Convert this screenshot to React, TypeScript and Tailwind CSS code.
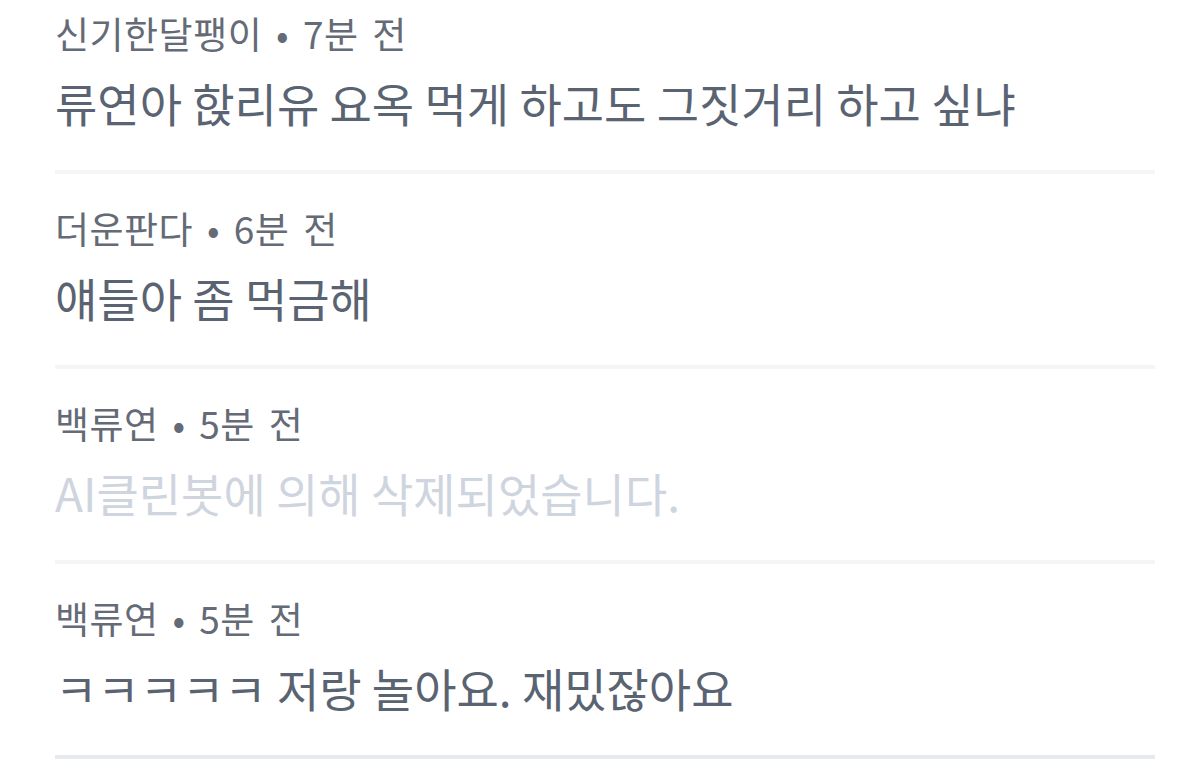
const comments = [
  { author: "신기한달팽이", time: "7분 전", text: "류연아 핝리유 요옥 먹게 하고도 그짓거리 하고 싶냐", deleted: false },
  { author: "더운판다", time: "6분 전", text: "얘들아 좀 먹금해", deleted: false },
  { author: "백류연", time: "5분 전", text: "AI클린봇에 의해 삭제되었습니다.", deleted: true },
  { author: "백류연", time: "5분 전", text: "ㅋㅋㅋㅋㅋ 저랑 놀아요. 재밌잖아요", deleted: false },
];

export default function App() {
  return (
    <div
      className="min-h-[771px] bg-white pl-[55px] pr-[45px]"
      style={{ fontFamily: '"Noto Sans CJK KR", "Noto Sans", sans-serif' }}
    >
      {comments.map((c, i) => (
        <div
          key={i}
          className={
            "flex flex-col pb-[37px] " +
            (i === 0 ? "pt-[8px] " : "pt-[29px] ") +
            (i === comments.length - 1 ? "border-b-4 border-[#e6e9ee]" : "border-b-4 border-[#f4f5f7]")
          }
        >
          <div className="h-[50px] leading-[50px] text-[37px] tracking-[0.5px] [word-spacing:5px] text-[#646b76] whitespace-nowrap">
            {c.author} • {c.time}
          </div>
          <div
            className={
              "mt-[13px] h-[62px] leading-[62px] text-[46px] whitespace-nowrap " +
              (c.deleted ? "text-[#cfd5de]" : "text-[#5a6372]")
            }
          >
            {c.text}
          </div>
        </div>
      ))}
    </div>
  );
}
